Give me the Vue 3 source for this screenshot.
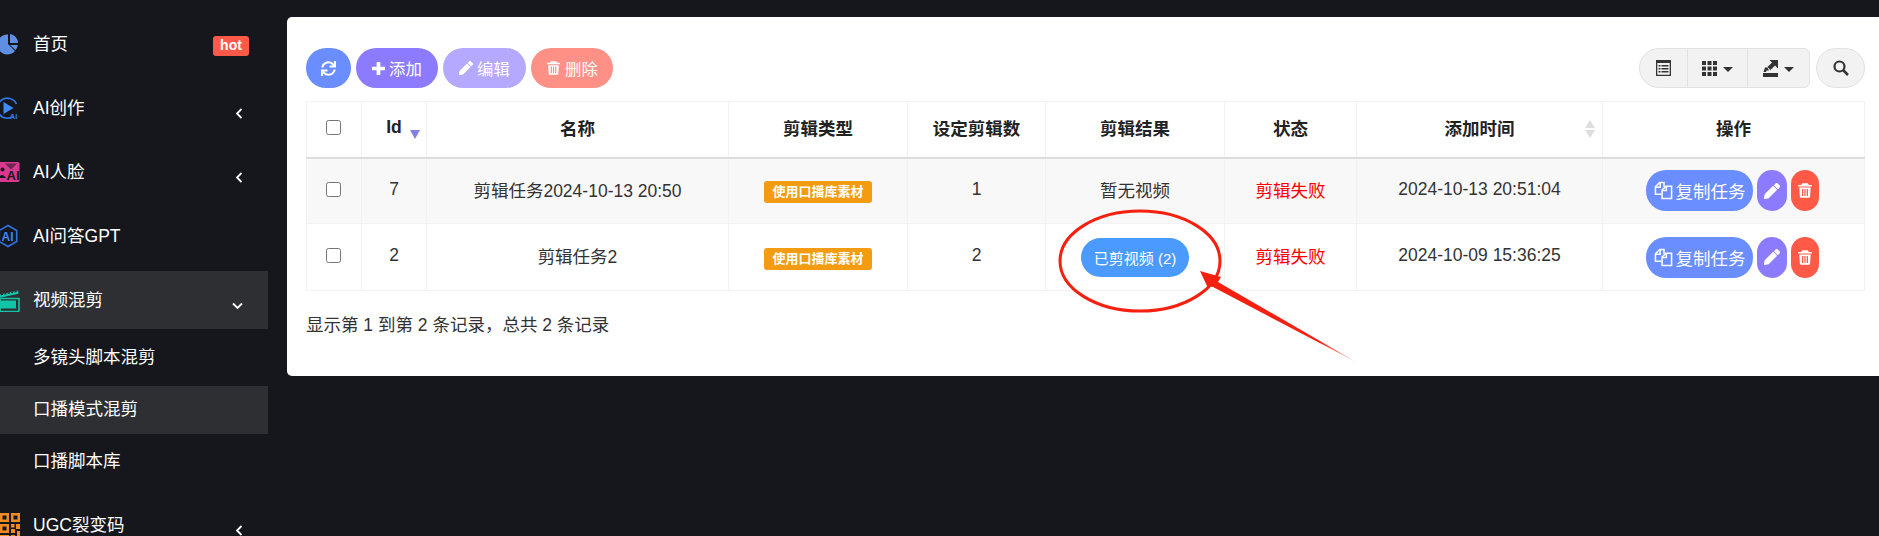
<script setup>
import { ref } from 'vue';

const menu = ref([
  { key: 'home', label: '首页', badge: 'hot' },
  { key: 'create', label: 'AI创作', arrow: 'left' },
  { key: 'face', label: 'AI人脸', arrow: 'left' },
  { key: 'gpt', label: 'AI问答GPT' },
  {
    key: 'mix',
    label: '视频混剪',
    arrow: 'down',
    active: true,
    children: [
      { label: '多镜头脚本混剪' },
      { label: '口播模式混剪', active: true },
      { label: '口播脚本库' }
    ]
  },
  { key: 'ugc', label: 'UGC裂变码', arrow: 'left' }
]);

const columns = [
  { label: '', width: 55 },
  { label: 'Id', width: 65, sort: 'desc' },
  { label: '名称', width: 302 },
  { label: '剪辑类型', width: 179 },
  { label: '设定剪辑数', width: 138 },
  { label: '剪辑结果', width: 179 },
  { label: '状态', width: 132 },
  { label: '添加时间', width: 246, sort: 'both' },
  { label: '操作', width: 262 }
];

const rows = ref([
  { id: 7, name: '剪辑任务2024-10-13 20:50', type: '使用口播库素材', count: 1, videos: 0, status: '剪辑失败', time: '2024-10-13 20:51:04' },
  { id: 2, name: '剪辑任务2', type: '使用口播库素材', count: 2, videos: 2, status: '剪辑失败', time: '2024-10-09 15:36:25' }
]);

const pencil = 'M497.9 142.1l-46.1 46.1c-4.7 4.7-12.3 4.7-17 0l-111-111c-4.7-4.7-4.7-12.3 0-17l46.1-46.1c18.7-18.7 49.1-18.7 67.9 0l60.1 60.1c18.8 18.7 18.8 49.1 0 67.9zM284.2 99.8L21.6 362.4.4 483.9c-2.9 16.4 11.4 30.6 27.8 27.8l121.5-21.3 262.6-262.6c4.7-4.7 4.7-12.3 0-17l-111-111c-4.8-4.7-12.4-4.7-17.1 0z';
const sync = 'M440.65 12.57l4 82.77A247.16 247.16 0 0 0 255.83 8C134.73 8 33.91 94.92 12.29 209.82A12 12 0 0 0 24.09 224h49.05a12 12 0 0 0 11.67-9.26 175.91 175.91 0 0 1 317-56.94l-101.46-4.86a12 12 0 0 0-12.57 12v47.41a12 12 0 0 0 12 12H500a12 12 0 0 0 12-12V12a12 12 0 0 0-12-12h-47.37a12 12 0 0 0-11.98 12.57zM255.83 432a175.61 175.61 0 0 1-146-77.8l101.8 4.87a12 12 0 0 0 12.57-12v-47.4a12 12 0 0 0-12-12H12a12 12 0 0 0-12 12V500a12 12 0 0 0 12 12h47.35a12 12 0 0 0 12-12.6l-4.15-82.57A247.17 247.17 0 0 0 255.83 504c121.11 0 221.93-86.92 243.55-201.82a12 12 0 0 0-11.8-14.18h-49.05a12 12 0 0 0-11.67 9.26A175.86 175.86 0 0 1 255.83 432z';
const trash = 'M5.2 0.8h5.6l1 1.7h3v1.6H1.2V2.500h3zM2.300 5h11.400l-.6 9.300q-.1 1-1.100 1H4q-1 0-1.100-1zM5 6.500v7h1.300v-7zM7.350 6.500v7h1.300v-7zM9.700 6.500v7H11v-7z';
</script>

<template>
  <div class="page">
    <aside class="sidebar">
      <template v-for="item in menu" :key="item.key">
        <div class="menu-item" :class="{ active: item.active }">
          <span class="menu-icon">
            <svg v-if="item.key === 'home'" width="20" height="22" viewBox="0 0 20 22">
              <path d="M9 1.500v9.500l7 7A10 10 0 1 1 7.500 1.500z" transform="translate(-1 0)" fill="#5f8fe0" />
              <path d="M10 1a9 9 0 0 1 8 9h-8z" fill="#5f8fe0" />
              <path d="M10 12l7.800 0a9.500 9.500 0 0 1-2.300 5z" fill="#5f8fe0" />
            </svg>
            <svg v-else-if="item.key === 'create'" width="20" height="24" viewBox="0 0 20 24">
              <path d="M14 20.500A10 10 0 1 1 17.500 8" transform="translate(-1 0)" fill="none" stroke="#2f74e0" stroke-width="1.700" />
              <path d="M3.500 6l10 6-10 6z" fill="#3f8cf2" />
              <text x="9.500" y="23" class="icon-text" fill="#2f74e0">AI</text>
            </svg>
            <svg v-else-if="item.key === 'face'" width="20" height="22" viewBox="0 0 20 22">
              <rect x="-3" y="1" width="22.500" height="20" rx="1.500" fill="#d6398f" />
              <circle cx="2.500" cy="8.500" r="2" fill="#16171c" />
              <path d="M-2 17q4-6 8 0z" fill="#16171c" />
              <path d="M5 2.500h12l-6 6z" fill="#16171c" opacity=".55" />
              <text x="6.500" y="19" class="icon-text big" fill="#16171c">AI</text>
            </svg>
            <svg v-else-if="item.key === 'gpt'" width="20" height="24" viewBox="0 0 20 24">
              <path d="M8 1.500l8.700 5v11l-8.700 5-8.700-5v-11z" fill="none" stroke="#2f74e0" stroke-width="1.600" />
              <text x="1.500" y="16.500" class="icon-text mid" fill="#3a8af0">AI</text>
            </svg>
            <svg v-else-if="item.key === 'mix'" width="20" height="24" viewBox="0 0 20 24">
              <path d="M0 6.500L18 2.500l.7 3.200L0 9.800z" fill="#12c4a8" />
              <path d="M1 6.800L17.500 3.300" stroke="#16171c" stroke-width="1" stroke-dasharray="2 1.500" />
              <path d="M0 10.500h19v11.500a1.500 1.500 0 0 1-1.500 1.500H0z" fill="none" stroke="#12c4a8" stroke-width="1.600" />
              <path d="M0 12.500h16v8H0z" fill="#12c4a8" />
            </svg>
            <svg v-else width="20" height="24" viewBox="0 0 20 24">
              <path fill="#f28a22" fill-rule="evenodd" d="M0 0h9v9H0zM2.500 2.500v4h4v-4zM11 0h9v9h-9zM13.500 2.500v4h4v-4zM0 11h9v9H0zM2.500 13.500v4h4v-4zM11 11h3.500v3.500H11zM16 11h4v5h-4zM11 16h4v4h-4zM17 18h3v6h-3zM0 22h9v2H0zM11 22h4v2h-4z" />
            </svg>
          </span>
          <span class="menu-label">{{ item.label }}</span>
          <span v-if="item.badge" class="hot">{{ item.badge }}</span>
          <svg v-if="item.arrow === 'left'" class="chevron" width="8" height="11" viewBox="0 0 8 11">
            <path d="M6.500 1L2 5.500 6.500 10" fill="none" stroke="#fff" stroke-width="1.800" />
          </svg>
          <svg v-if="item.arrow === 'down'" class="chevron down" width="11" height="8" viewBox="0 0 11 8">
            <path d="M1 1.500L5.500 6 10 1.500" fill="none" stroke="#fff" stroke-width="1.800" />
          </svg>
        </div>
        <div v-if="item.children" class="submenu">
          <div v-for="child in item.children" :key="child.label" class="submenu-item" :class="{ active: child.active }">
            {{ child.label }}
          </div>
        </div>
      </template>
    </aside>

    <main class="card">
      <div class="toolbar">
        <div class="toolbar-left">
          <button class="btn btn-refresh">
            <svg width="15" height="15" viewBox="0 0 512 512"><path :d="sync" fill="#fff" /></svg>
          </button>
          <button class="btn btn-add">
            <svg width="13" height="13" viewBox="0 0 14 14"><path d="M5 0h4v5h5v4H9v5H5V9H0V5h5z" fill="#fff" /></svg>
            添加
          </button>
          <button class="btn btn-edit">
            <svg width="14" height="14" viewBox="0 0 512 512"><path :d="pencil" fill="#fff" /></svg>
            编辑
          </button>
          <button class="btn btn-delete">
            <svg width="15" height="16" viewBox="0 0 16 16"><path :d="trash" fill="#fff" fill-rule="evenodd" /></svg>
            删除
          </button>
        </div>
        <div class="toolbar-right">
          <div class="tool-group">
            <span class="tool tool-list">
              <svg width="15" height="16" viewBox="0 0 15 16">
                <path fill="#333" fill-rule="evenodd" d="M0 0h15v16H0zM1.300 3v11.700h12.400V3zM2.500 5h2v1.500h-2zM5.500 5h7v1.500h-7zM2.500 8h2v1.500h-2zM5.500 8h7v1.500h-7zM2.500 11h2v1.500h-2zM5.500 11h7v1.500h-7z" />
              </svg>
            </span>
            <span class="tool tool-cols">
              <svg width="15" height="15" viewBox="0 0 15 15">
                <path fill="#333" d="M0 0h4v4H0zM5.500 0h4v4h-4zM11 0h4v4h-4zM0 5.500h4v4H0zM5.500 5.500h4v4h-4zM11 5.500h4v4h-4zM0 11h4v4H0zM5.500 11h4v4h-4zM11 11h4v4h-4z" />
              </svg>
              <i class="caret"></i>
            </span>
            <span class="tool tool-export">
              <svg width="15" height="17" viewBox="0 0 15 17">
                <path fill="#333" d="M0 13h15v4H0zM6.500 0H15v8.500l-3-3-4.500 4.500-3-3L9 2.500zM2 7.500h2.500L6 10.500H3.500L3 12H0.500z" />
              </svg>
              <i class="caret"></i>
            </span>
          </div>
          <span class="tool-search">
            <svg width="16" height="16" viewBox="0 0 16 16">
              <circle cx="6.500" cy="6.500" r="5" fill="none" stroke="#333" stroke-width="2.200" />
              <path d="M10.500 10.500L15 15" stroke="#333" stroke-width="2.500" />
            </svg>
          </span>
        </div>
      </div>

      <table class="data-table">
        <colgroup>
          <col v-for="col in columns" :key="col.label" :style="{ width: col.width + 'px' }" />
        </colgroup>
        <thead>
          <tr>
            <th v-for="(col, i) in columns" :key="col.label" class="head-cell">
              <input v-if="i === 0" type="checkbox" class="check" />
              <template v-else>{{ col.label }}</template>
              <svg v-if="col.sort === 'desc'" class="sort sort-id" width="10" height="9" viewBox="0 0 10 9">
                <path d="M0 0h10L5 9z" fill="#7f82e0" />
              </svg>
              <svg v-if="col.sort === 'both'" class="sort sort-time" width="10" height="18" viewBox="0 0 10 18">
                <path d="M5 0l5 8H0zM5 18L0 10h10z" fill="#dedede" />
              </svg>
            </th>
          </tr>
        </thead>
        <tbody>
          <tr v-for="row in rows" :key="row.id">
            <td><input type="checkbox" class="check" /></td>
            <td>{{ row.id }}</td>
            <td>{{ row.name }}</td>
            <td><span class="label">{{ row.type }}</span></td>
            <td>{{ row.count }}</td>
            <td>
              <button v-if="row.videos" class="video-btn">已剪视频 ({{ row.videos }})</button>
              <template v-else>暂无视频</template>
            </td>
            <td class="status">{{ row.status }}</td>
            <td>{{ row.time }}</td>
            <td>
              <div class="actions">
                <button class="action action-copy">
                  <svg width="19" height="19" viewBox="0 0 20 20" fill="none" stroke="#fff" stroke-width="1.600">
                    <path d="M8 14H1.500V6L6 1.500h4.500V6" />
                    <path d="M1.500 6.500H6.500V1.500" />
                    <path d="M8.500 9.500L12.500 5.500H18.500V18.500H8.500z" />
                    <path d="M8.500 10H13V5.500" />
                  </svg>
                  复制任务
                </button>
                <button class="action action-edit">
                  <svg width="16" height="16" viewBox="0 0 512 512"><path :d="pencil" fill="#fff" /></svg>
                </button>
                <button class="action action-del">
                  <svg width="16" height="17" viewBox="0 0 16 16"><path :d="trash" fill="#fff" fill-rule="evenodd" /></svg>
                </button>
              </div>
            </td>
          </tr>
        </tbody>
      </table>

      <p class="summary">显示第 1 到第 2 条记录，总共 2 条记录</p>
    </main>

    <!-- red mark drawn over the screenshot -->
    <svg class="annotation" width="1879" height="536" viewBox="0 0 1879 536">
      <defs>
        <linearGradient id="arrowFade" gradientUnits="userSpaceOnUse" x1="1230" y1="288" x2="1358" y2="363">
          <stop offset="0.7" stop-color="#f5200f" />
          <stop offset="1" stop-color="#f5200f" stop-opacity="0.2" />
        </linearGradient>
      </defs>
      <ellipse cx="1140" cy="261" rx="80" ry="50" fill="none" stroke="#f5200f" stroke-width="3" />
      <path d="M1200 271L1221 277 1218 282 1358 363 1213 287 1207 286z" fill="url(#arrowFade)" />
    </svg>
  </div>
</template>

<style>
html,
body {
  margin: 0;
  background: #16171c;
}
</style>

<style scoped>
.page {
  position: relative;
  display: flex;
  align-items: flex-start;
  height: 536px;
  overflow: hidden;
  background: #16171c;
  font-family: "Liberation Sans", "Noto Sans CJK SC", sans-serif;
  font-size: 17.5px;
  color: #333;
}

.sidebar {
  flex: 0 0 268px;
  padding-top: 15px;
  color: #fff;
}

.menu-item {
  display: flex;
  align-items: center;
  box-sizing: border-box;
  height: 58px;
  margin-bottom: 6px;
  padding-right: 19px;
  padding-bottom: 4px;
}

.menu-item.active {
  background: #2e2f33;
  margin-bottom: 5px;
}

.menu-icon {
  display: flex;
  width: 20px;
  margin-top: 4px;
  margin-right: 13px;
}

.menu-label {
  flex: 1;
}

.icon-text {
  font-size: 8px;
  font-weight: 700;
}

.icon-text.mid {
  font-size: 12px;
}

.icon-text.big {
  font-size: 13px;
}

.hot {
  box-sizing: border-box;
  width: 36px;
  height: 20px;
  margin-top: 8px;
  line-height: 19px;
  text-align: center;
  border-radius: 3px;
  background: #ff5a47;
  font-size: 14px;
  font-weight: 700;
}

.chevron {
  margin-top: 15px;
  margin-right: 6px;
}

.chevron.down {
  margin-right: 6px;
}

.submenu {
  margin-bottom: 10px;
}

.submenu-item {
  height: 48px;
  line-height: 46px;
  margin-bottom: 4px;
  padding-left: 33px;
}

.submenu-item.active {
  background: #2e2f33;
}

.card {
  box-sizing: border-box;
  flex: 1;
  height: 359px;
  margin-top: 17px;
  margin-left: 19px;
  padding: 31px 15px 0 19px;
  background: #fff;
  border-radius: 5px 0 0 5px;
}

.toolbar {
  display: flex;
  justify-content: space-between;
  height: 40px;
  margin-bottom: 13px;
}

.toolbar-left,
.toolbar-right {
  display: flex;
  gap: 5px;
}

.toolbar-right {
  gap: 6px;
}

button {
  font-family: inherit;
  border: none;
  color: #fff;
  cursor: pointer;
}

.btn {
  display: flex;
  align-items: center;
  justify-content: center;
  gap: 4px;
  height: 40px;
  padding: 0;
  border-radius: 20px;
  font-size: 16.4px;
}

.btn-refresh {
  width: 45px;
  background: #6a8dff;
}

.btn-add {
  width: 82px;
  background: #8c7aff;
}

.btn-edit {
  width: 83px;
  background: #b5a8ff;
}

.btn-delete {
  width: 82px;
  background: #ff9086;
}

.tool-group {
  display: flex;
  box-sizing: border-box;
  width: 171px;
  height: 40px;
  background: #f2f2f2;
  border: 1px solid #e2e2e2;
  border-radius: 20px 6px 6px 20px;
}

.tool {
  display: flex;
  align-items: center;
  justify-content: center;
  gap: 6px;
  box-sizing: border-box;
  height: 100%;
}

.tool-list {
  width: 47px;
}

.tool-cols {
  width: 60px;
  border-left: 1px solid #e2e2e2;
}

.tool-export {
  width: 62px;
  border-left: 1px solid #e2e2e2;
}

.caret {
  width: 0;
  height: 0;
  margin-top: 2px;
  border-left: 5px solid transparent;
  border-right: 5px solid transparent;
  border-top: 5px solid #333;
}

.tool-search {
  display: flex;
  align-items: center;
  justify-content: center;
  box-sizing: border-box;
  width: 49px;
  height: 40px;
  background: #f2f2f2;
  border: 1px solid #e2e2e2;
  border-radius: 20px;
}

.data-table {
  width: 1558px;
  table-layout: fixed;
  border-collapse: collapse;
}

th,
td {
  position: relative;
  box-sizing: border-box;
  padding: 0 0 3px;
  text-align: center;
  border: 1px solid #f2f2f2;
}

th {
  height: 56px;
  color: #222;
  font-weight: 700;
  border-bottom: 2px solid #ddd;
}

td {
  height: 66px;
}

tbody tr:nth-child(even) td {
  height: 67px;
}

tbody tr:nth-child(odd) {
  background: #f8f8f8;
}

.check {
  width: 15px;
  height: 15px;
  margin: 0 2px 2px 0;
  vertical-align: middle;
}

.sort {
  position: absolute;
}

.sort-id {
  right: 6px;
  top: 28px;
}

.sort-time {
  right: 7px;
  top: 18px;
}

.label {
  display: inline-block;
  width: 108px;
  height: 22px;
  line-height: 22px;
  margin-top: 6px;
  border-radius: 3px;
  background: #f39c12;
  color: #fff;
  font-size: 13px;
  font-weight: 700;
}

.video-btn {
  display: block;
  width: 108px;
  height: 39px;
  margin: 3px auto 0;
  padding: 0;
  border-radius: 20px;
  background: #4a9aff;
  font-size: 15px;
}

.status {
  color: #f00;
}

.actions {
  display: flex;
  justify-content: center;
  gap: 4px;
  margin-top: 3px;
  padding-right: 2px;
}

.action {
  display: flex;
  align-items: center;
  justify-content: center;
  height: 41px;
  padding: 0;
  border-radius: 20px;
  font-size: 17.5px;
}

.action-copy {
  gap: 3px;
  width: 107px;
  background: #6a8dff;
}

.action-edit {
  width: 30px;
  background: #8c7aff;
}

.action-del {
  width: 28px;
  background: #ff5a47;
}

.summary {
  margin: 22px 0 0;
  line-height: 24px;
}

.annotation {
  position: absolute;
  left: 0;
  top: 0;
  pointer-events: none;
}
</style>
